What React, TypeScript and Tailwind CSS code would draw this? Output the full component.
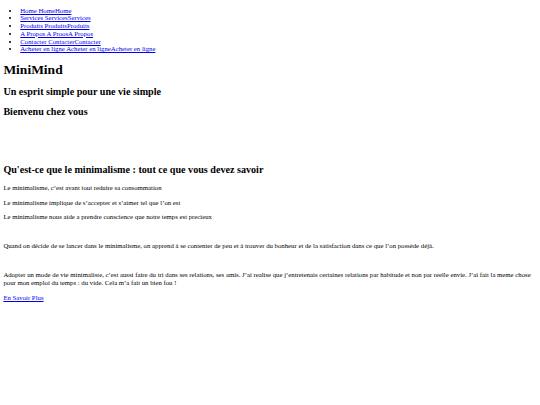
import React from "react";

const navItems = [
  "Home HomeHome",
  "Services ServicesServices",
  "Produits ProduitsProduits",
  "A Propos A ProosA Propos",
  "Contacter ContacterContacter",
  "Acheter en ligne Acheter en ligneAcheter en ligne",
];

export default function App() {
  return (
    <div className="min-h-[405px] bg-white px-[3.375px] py-0 text-black font-['Liberation_Serif',serif]">
      <ul className="mt-[6.5px] mb-[6.75px] list-disc pl-[16.875px] text-[6.75px] leading-[7.77px]">
        {navItems.map((t) => (
          <li key={t}>
            <a href="#" className="text-[#0000ee] underline">
              {t}
            </a>
          </li>
        ))}
      </ul>
      <h1 className="my-[8.5px] text-[13.5px] leading-[15.5px] font-bold">MiniMind</h1>
      <h2 className="my-[8.4px] text-[10.125px] leading-[11.64px] font-bold">
        Un esprit simple pour une vie simple
      </h2>
      <h2 className="my-[8.4px] text-[10.125px] leading-[11.64px] font-bold">Bienvenu chez vous</h2>
      <h2 className="mt-[47px] mb-[8.4px] text-[10.125px] leading-[11.64px] font-bold">
        Qu'est-ce que le minimalisme : tout ce que vous devez savoir
      </h2>
      <div className="text-[6.75px] leading-[7.77px]">
        <p className="my-[6.75px]">Le minimalisme, c’est avant tout reduire sa consommation</p>
        <p className="my-[6.75px]">Le minimalisme implique de s’accepter et s’aimer tel que l’on est</p>
        <p className="my-[6.75px]">Le minimalisme nous aide a prendre conscience que notre temps est precieux</p>
        <p className="my-[6.75px]">{"\u00a0"}</p>
        <p className="my-[6.75px]">
          Quand on décide de se lancer dans le minimalisme, on apprend à se contenter de peu et à trouver du
          bonheur et de la satisfaction dans ce que l’on possède déjà.
        </p>
        <p className="my-[6.75px]">{"\u00a0"}</p>
        <p className="my-[6.75px]">
          Adopter un mode de vie minimaliste, c’est aussi faire du tri dans ses relations, ses amis. J’ai realise
          que j’entretenais certaines relations par habitude et non par reelle envie. J’ai fait la meme chose
          pour mon emploi du temps : du vide. Cela m’a fait un bien fou !
        </p>
        <p className="my-[6.75px]">
          <a href="#" className="text-[#0000ee] underline">
            En Savoir Plus
          </a>
        </p>
      </div>
    </div>
  );
}
